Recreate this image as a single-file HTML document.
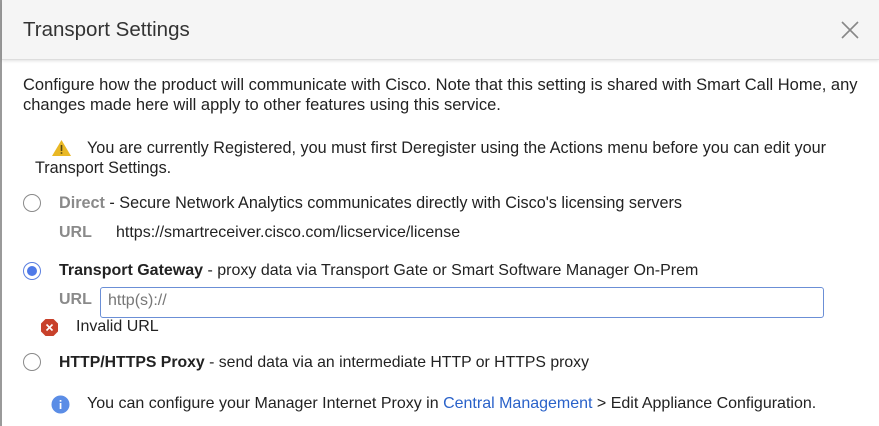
<!DOCTYPE html>
<html><head><meta charset="utf-8"><style>
*{margin:0;padding:0;box-sizing:border-box}
body{width:879px;height:426px;overflow:hidden;background:#fff;font-family:"Liberation Sans",sans-serif;color:#222;position:relative;font-size:16px}
.lb{position:absolute;left:0;top:0;width:2px;height:426px;background:#9a9a9a}
.hdr{position:absolute;left:2px;top:0;right:0;height:60px;background:#f5f5f5;border-bottom:1px solid #ddd;box-shadow:0 1px 3px rgba(0,0,0,.12)}
.t{position:absolute;white-space:nowrap}
.r{position:absolute;width:18px;height:18px;border-radius:50%;border:1px solid #8a8a8a;background:#fff}
.r.on{border-color:#5b7fe0}
.r.on::after{content:"";position:absolute;left:3px;top:3px;width:10px;height:10px;border-radius:50%;background:#4e79e8}
.g{color:#8a8a8a;font-weight:bold}
b{color:#222}
</style></head><body>
<div class="lb"></div>
<div class="hdr"></div>
<div class="t" style="left:23px;top:18px;font-size:20.5px;color:#333">Transport Settings</div>
<svg style="position:absolute;left:841px;top:21px" width="18" height="18"><path d="M1 1L17 17M17 1L1 17" stroke="#888" stroke-width="1.6"/></svg>
<div class="t" style="left:23px;top:75px;line-height:20px;font-size:16.5px">Configure how the product will communicate with Cisco. Note that this setting is shared with Smart Call Home, any<br>changes made here will apply to other features using this service.</div>
<svg style="position:absolute;left:51px;top:139px" width="21" height="18"><path d="M10.5 1L20 17H1Z" fill="#e9b825"/><rect x="9.7" y="6" width="1.6" height="6" fill="#5a4a10"/><rect x="9.7" y="13.2" width="1.6" height="1.6" fill="#5a4a10"/></svg>
<div class="t" style="left:87px;top:138px;line-height:20px;font-size:16.2px">You are currently Registered, you must first Deregister using the Actions menu before you can edit your</div>
<div class="t" style="left:35px;top:158px;line-height:20px;font-size:16.2px">Transport Settings.</div>
<div class="r" style="left:23px;top:194px"></div>
<div class="t" style="left:59px;top:194px;font-size:16.2px"><span class="g">Direct</span> - Secure Network Analytics communicates directly with Cisco's licensing servers</div>
<div class="t g" style="left:59px;top:224px">URL</div>
<div class="t" style="left:116px;top:224px">https://smartreceiver.cisco.com/licservice/license</div>
<div class="r on" style="left:23px;top:262px"></div>
<div class="t" style="left:59px;top:262px"><b>Transport Gateway</b> - proxy data via Transport Gate or Smart Software Manager On-Prem</div>
<div class="t g" style="left:59px;top:291px">URL</div>
<div style="position:absolute;left:100px;top:287px;width:724px;height:31px;border:1px solid #6b8fd6;border-radius:3px"></div>
<div class="t" style="left:108px;top:292px;color:#777">http(s)://</div>
<svg style="position:absolute;left:40px;top:318px" width="19" height="19"><path d="M5.5 1h8L18 5.5v8L13.5 18h-8L1 13.5v-8Z" fill="#c8412b"/><path d="M6.5 6.5l6 6M12.5 6.5l-6 6" stroke="#fff" stroke-width="1.6"/></svg>
<div class="t" style="left:76px;top:318px">Invalid URL</div>
<div class="r" style="left:23px;top:353px"></div>
<div class="t" style="left:59px;top:354px;font-size:15.8px"><b>HTTP/HTTPS Proxy</b> - send data via an intermediate HTTP or HTTPS proxy</div>
<svg style="position:absolute;left:51px;top:395px" width="19" height="19"><circle cx="9.5" cy="9.5" r="9" fill="#5b8de6"/><rect x="8.7" y="8" width="1.7" height="6" fill="#fff"/><rect x="8.7" y="5" width="1.7" height="1.7" fill="#fff"/></svg>
<div class="t" style="left:87px;top:395px">You can configure your Manager Internet Proxy in <span style="color:#2a62c9">Central Management</span> &gt; Edit Appliance Configuration.</div>
</body></html>
